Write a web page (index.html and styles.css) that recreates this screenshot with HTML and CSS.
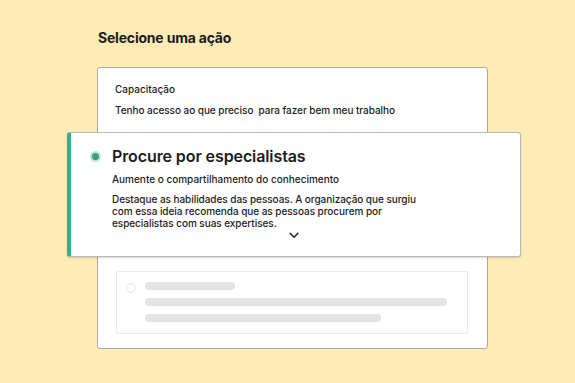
FILE: index.html
```html
<!DOCTYPE html>
<html lang="pt-BR">
<head>
<meta charset="utf-8">
<link rel="stylesheet" href="styles.css">
</head>
<body>
<main class="page">
  <h1 class="title">Selecione uma ação</h1>
  <section class="back-card">
    <p class="back-label">Capacitação</p>
    <p class="back-question">Tenho acesso ao que preciso&nbsp; para fazer bem meu trabalho</p>
    <article class="option-card">
      <div class="option-head">
        <span class="radio"><span class="radio-dot"></span></span>
        <h2 class="option-title">Procure por especialistas</h2>
      </div>
      <p class="option-sub">Aumente o compartilhamento do conhecimento</p>
      <p class="option-text">Destaque as habilidades das pessoas. A organização que surgiu com essa ideia recomenda que as pessoas procurem por especialistas com suas expertises.</p>
      <div class="chevron-row">
        <svg class="chevron" width="10" height="7" viewBox="0 0 10 7"><path d="M1.2 1.4 L5 5.2 L8.8 1.4" fill="none" stroke="#2a2a2a" stroke-width="1.5" stroke-linecap="round" stroke-linejoin="round"/></svg>
      </div>
    </article>
    <div class="skeleton">
      <span class="sk-radio"></span>
      <div class="sk-lines">
        <span class="sk-bar sk-a"></span>
        <span class="sk-bar sk-b"></span>
        <span class="sk-bar sk-c"></span>
      </div>
    </div>
  </section>
</main>
</body>
</html>
```
FILE: styles.css
```css
* { box-sizing: border-box; }
html, body { margin: 0; padding: 0; }
body {
  background: #feecb6;
  font-family: "Inter", "Liberation Sans", sans-serif;
  color: #1c1c1c;
  width: 575px;
  height: 383px;
  overflow: hidden;
}
.page {
  padding: 28px 0 0 97px;
}
.title {
  margin: 0 0 0 1px;
  font-size: 14px;
  font-weight: 700;
  letter-spacing: -0.2px;
  line-height: 20px;
  color: #1b1b1b;
}
.back-card {
  margin-top: 19px;
  width: 391px;
  height: 282px;
  background: #fff;
  border: 1px solid #a9a9a3;
  border-radius: 3px;
  padding: 15px 0 0 17px;
}
.back-label {
  margin: 0;
  font-size: 10px;
  font-weight: 500;
  line-height: 13px;
}
.back-question {
  margin: 8px 0 0 0;
  font-size: 10px;
  font-weight: 500;
  line-height: 13px;
  letter-spacing: -0.05px;
}
.option-card {
  margin: 15px 0 0 -48px;
  width: 454px;
  height: 125px;
  background: #fff;
  border: 1px solid #b9b9b9;
  border-left: 4px solid #3fae86;
  border-radius: 3px;
  box-shadow: 0 1px 2px rgba(0,0,0,0.15);
  padding: 13px 0 0 19px;
}
.option-head {
  display: flex;
  align-items: center;
  gap: 11px;
}
.radio {
  width: 11px;
  height: 11px;
  border-radius: 50%;
  background: #bfe6d5;
  display: flex;
  align-items: center;
  justify-content: center;
  flex: none;
}
.radio-dot {
  width: 7px;
  height: 7px;
  border-radius: 50%;
  background: #3a9f7b;
}
.option-title {
  margin: 0;
  font-size: 16px;
  font-weight: 600;
  line-height: 20px;
  letter-spacing: -0.1px;
}
.option-sub {
  margin: 7px 0 0 22px;
  font-size: 10px;
  font-weight: 500;
  line-height: 13px;
}
.option-text {
  margin: 7px 0 0 22px;
  width: 310px;
  font-size: 10px;
  font-weight: 500;
  line-height: 12px;
  letter-spacing: -0.05px;
}
.chevron-row {
  margin-top: 3px;
  padding-left: 199px;
  height: 8px;
}
.chevron { display: block; }
.skeleton {
  margin: 14px 0 0 1px;
  width: 352px;
  height: 63px;
  border: 1px solid #e9e9e9;
  border-radius: 2px;
  display: flex;
  padding: 10px 0 0 9px;
  gap: 9px;
}
.sk-radio {
  flex: none;
  width: 10px;
  height: 10px;
  border-radius: 50%;
  border: 1px solid #e4e4e4;
  margin-top: 1px;
}
.sk-lines {
  display: flex;
  flex-direction: column;
  gap: 8px;
}
.sk-bar {
  display: block;
  height: 8px;
  border-radius: 4px;
  background: #e3e3e3;
}
.sk-a { width: 90px; }
.sk-b { width: 302px; }
.sk-c { width: 236px; }
```
